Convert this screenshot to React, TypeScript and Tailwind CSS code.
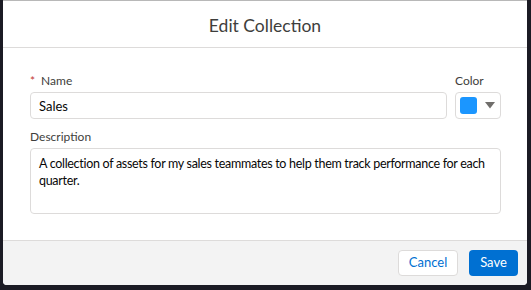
export default function App() {
  return (
    <div
      className="w-[531px] h-[290px] bg-[#1b1b24] pl-[3px] pr-[4px] pb-[5px] overflow-hidden"
      style={{ fontFamily: "Lato, 'Open Sans', sans-serif" }}
    >
      <div className="h-full bg-white rounded-b-[4px] border-t border-[#b8b8b8] flex flex-col overflow-hidden">
        <div className="h-[47px] border-b border-[#dddbda] flex items-center justify-center pt-[4px]">
          <h1 className="text-[17.5px] text-[#3e3e3c] leading-none">Edit Collection</h1>
        </div>

        <div className="flex-1 pl-[27px] pr-[26px] pt-[27px]">
          <div className="flex gap-[8px]">
            <div className="flex-1">
              <label className="block text-[12px] text-[#3e3e3c] leading-none mb-[5px]">
                <span className="text-[#c23934] mr-[6px]">*</span>Name
              </label>
              <input
                defaultValue="Sales"
                className="w-full h-[27px] border border-[#dddbda] rounded-[4px] px-[8px] text-[13px] text-[#080707] outline-none"
              />
            </div>
            <div className="w-[46px]">
              <label className="block text-[12px] text-[#3e3e3c] leading-none mb-[5px]">Color</label>
              <button className="w-[46px] h-[27px] border border-[#dddbda] rounded-[4px] flex items-center pl-[4px] gap-[8px]">
                <span className="w-[17px] h-[17px] rounded-[3px] bg-[#1b96ff]" />
                <svg width="10" height="7" viewBox="0 0 10 7">
                  <path d="M0 0 H10 L5 6.5 Z" fill="#706e6b" />
                </svg>
              </button>
            </div>
          </div>

          <label className="block text-[12px] text-[#3e3e3c] leading-none mt-[12px] mb-[5px]">Description</label>
          <textarea
            defaultValue="A collection of assets for my sales teammates to help them track performance for each quarter."
            className="w-full h-[66px] border border-[#dddbda] rounded-[4px] px-[8px] pt-[6px] text-[12.5px] tracking-[-0.3px] leading-[17px] text-[#080707] resize-none outline-none"
          />
        </div>

        <div className="h-[45px] bg-[#f3f3f3] border-t border-[#dddbda] flex items-center justify-end gap-[11px] pr-[9px]">
          <button className="h-[26px] w-[60px] bg-white border border-[#dddbda] rounded-[4px] text-[13px] text-[#0070d2]">
            Cancel
          </button>
          <button className="h-[26px] w-[49px] bg-[#0070d2] rounded-[4px] text-[13px] text-white">
            Save
          </button>
        </div>
      </div>
    </div>
  );
}
